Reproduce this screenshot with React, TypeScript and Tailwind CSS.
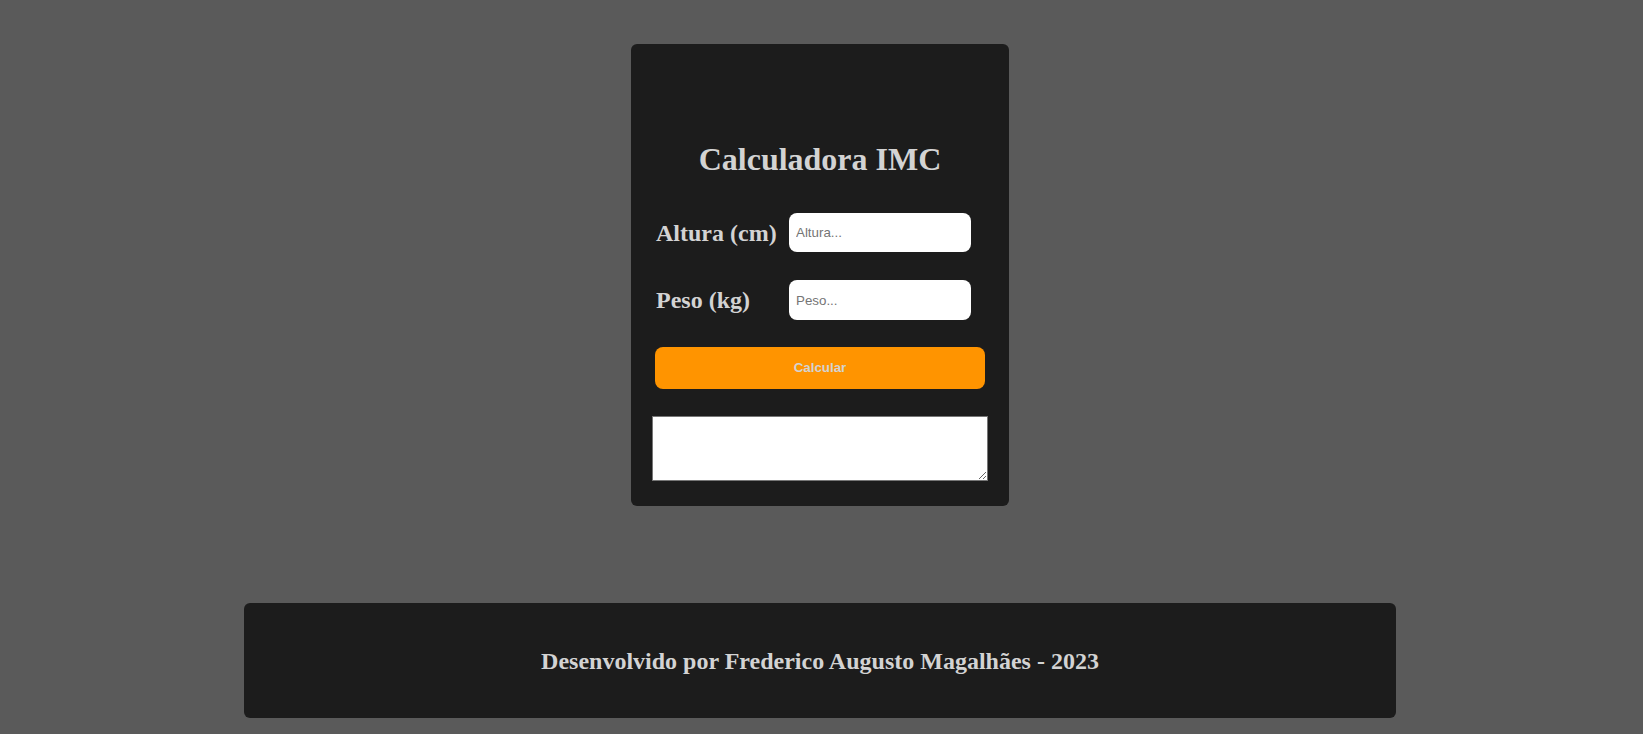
import React from "react";

export default function App() {
  const serif = { fontFamily: '"Liberation Serif", "Times New Roman", serif' };
  return (
    <div className="min-h-screen w-full bg-[#5a5a5a] pb-[15px] pr-[3px] pt-[44px]" style={serif}>
      <div className="mx-auto w-[378px] rounded-[6px] bg-[#1c1c1c] px-[21px] pb-[25px] pt-[97px]">
        <h1 className="text-center text-[32px] font-bold leading-[37px] text-[#d3d3d3] [font-family:'Liberation_Serif',serif]">
          Calculadora IMC
        </h1>
        <div className="mt-[35px] flex items-center pl-[4px]">
          <label className="w-[133px] text-[24px] font-bold leading-[28px] text-[#d3d3d3] [font-family:'Liberation_Serif',serif]">
            Altura (cm)
          </label>
          <input
            placeholder="Altura..."
            className="h-[39px] w-[182px] rounded-[8px] bg-white px-[7px] text-[13.33px] text-black outline-none placeholder:text-[#757575] [font-family:'Liberation_Sans',Arial,sans-serif]"
          />
        </div>
        <div className="mt-[28px] flex items-center pl-[4px]">
          <label className="w-[133px] text-[24px] font-bold leading-[28px] text-[#d3d3d3] [font-family:'Liberation_Serif',serif]">
            Peso (kg)
          </label>
          <input
            placeholder="Peso..."
            className="h-[40px] w-[182px] rounded-[8px] bg-white px-[7px] text-[13.33px] text-black outline-none placeholder:text-[#757575] [font-family:'Liberation_Sans',Arial,sans-serif]"
          />
        </div>
        <button className="ml-[3px] mt-[27px] block h-[42px] w-[330px] rounded-[8px] bg-[#ff9400] text-[13.33px] font-bold text-[#d3d3d3] [font-family:'Liberation_Sans',Arial,sans-serif]">
          Calcular
        </button>
        <textarea className="mt-[27px] block h-[65px] w-[336px] border border-[#767676] bg-white [font-family:'Liberation_Mono',monospace]" />
      </div>
      <footer className="mx-auto mt-[97px] flex h-[115px] w-[1152px] items-center justify-center rounded-[6px] bg-[#1c1c1c]">
        <p className="text-[24px] font-bold leading-[28px] text-[#d3d3d3] [font-family:'Liberation_Serif',serif]">
          Desenvolvido por Frederico Augusto Magalhães - 2023
        </p>
      </footer>
    </div>
  );
}
